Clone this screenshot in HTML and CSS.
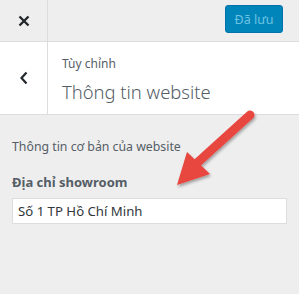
FILE: index.html
```html
<!DOCTYPE html>
<html>
<head>
<meta charset="utf-8">
<link rel="stylesheet" href="styles.css">
</head>
<body>
<div class="panel">
  <div class="topbar">
    <div class="close">
      <svg width="12" height="12" viewBox="0 0 12 12"><path d="M1.5 1.5 L10.5 10.5 M10.5 1.5 L1.5 10.5" stroke="#23282d" stroke-width="2.4" stroke-linecap="butt"/></svg>
    </div>
    <div class="actions">
      <button class="save">Đã lưu</button>
    </div>
  </div>
  <div class="header">
    <div class="back">
      <svg width="10" height="14" viewBox="0 0 10 14"><path d="M7.5 1.5 L2.5 7 L7.5 12.5" fill="none" stroke="#23282d" stroke-width="2.2"/></svg>
    </div>
    <div class="titles">
      <div class="crumb">Tùy chỉnh</div>
      <div class="title">Thông tin website</div>
    </div>
  </div>
  <div class="content">
    <p class="desc">Thông tin cơ bản của website</p>
    <label class="label">Địa chỉ showroom</label>
    <input class="field" type="text" value="Số 1 TP Hồ Chí Minh">
  </div>
  <svg class="arrow" width="299" height="294" viewBox="0 0 299 294">
    <defs>
      <filter id="sh" x="-20%" y="-20%" width="140%" height="140%">
        <feDropShadow dx="1" dy="2" stdDeviation="1.5" flood-color="#000" flood-opacity="0.35"/>
      </filter>
    </defs>
    <g filter="url(#sh)" fill="#e8463f">
      <path d="M250 115 L197 163" stroke="#e8463f" stroke-width="9" stroke-linecap="round"/>
      <polygon points="177,185 187,152 210,174"/>
    </g>
  </svg>
</div>
</body>
</html>
```

FILE: styles.css
```css
html, body {
  margin: 0;
  padding: 0;
  background: #eeeeee;
}
body {
  font-family: "Noto Sans", "Open Sans", sans-serif;
  color: #555d66;
}
.panel {
  position: relative;
  width: 299px;
  height: 294px;
  overflow: hidden;
}
.topbar {
  display: flex;
  height: 41px;
  border-bottom: 1px solid #dddddd;
  background: #eeeeee;
}
.close {
  width: 47px;
  border-right: 1px solid #dddddd;
  display: flex;
  align-items: center;
  justify-content: center;
}
.actions {
  flex: 1;
  display: flex;
  justify-content: flex-end;
  align-items: flex-start;
  padding-right: 16px;
  padding-top: 5px;
}
.save {
  width: 58px;
  height: 28px;
  border: 1px solid #0073aa;
  border-radius: 3px;
  background: #0085ba;
  color: #6dc3e2;
  font-family: "Noto Sans", sans-serif;
  font-size: 12.5px;
  padding: 0;
}
.header {
  display: flex;
  height: 72px;
  background: #ffffff;
  border-bottom: 1px solid #dddddd;
}
.back {
  width: 47px;
  border-right: 1px solid #dddddd;
  display: flex;
  align-items: center;
  justify-content: center;
}
.titles {
  padding-left: 14px;
  padding-top: 14px;
}
.crumb {
  font-size: 12px;
  line-height: 16px;
  color: #555d66;
}
.title {
  font-size: 18.4px;
  font-weight: 300;
  line-height: 28px;
  margin-top: 6px;
  color: #555d66;
}
.content {
  padding: 0 12px;
}
.desc {
  margin: 23px 0 0;
  font-size: 12.3px;
  line-height: 18px;
  color: #555d66;
}
.label {
  display: block;
  margin-top: 17px;
  font-size: 13px;
  font-weight: 700;
  line-height: 18px;
  color: #555d66;
}
.field {
  display: block;
  box-sizing: border-box;
  width: 275px;
  height: 26px;
  margin-top: 7px;
  padding: 0 5px;
  border: 1px solid #dddddd;
  background: #ffffff;
  font-family: "Noto Sans", sans-serif;
  font-size: 13.2px;
  color: #32373c;
  outline: none;
}
.arrow {
  position: absolute;
  left: 0;
  top: 0;
  pointer-events: none;
}
```
